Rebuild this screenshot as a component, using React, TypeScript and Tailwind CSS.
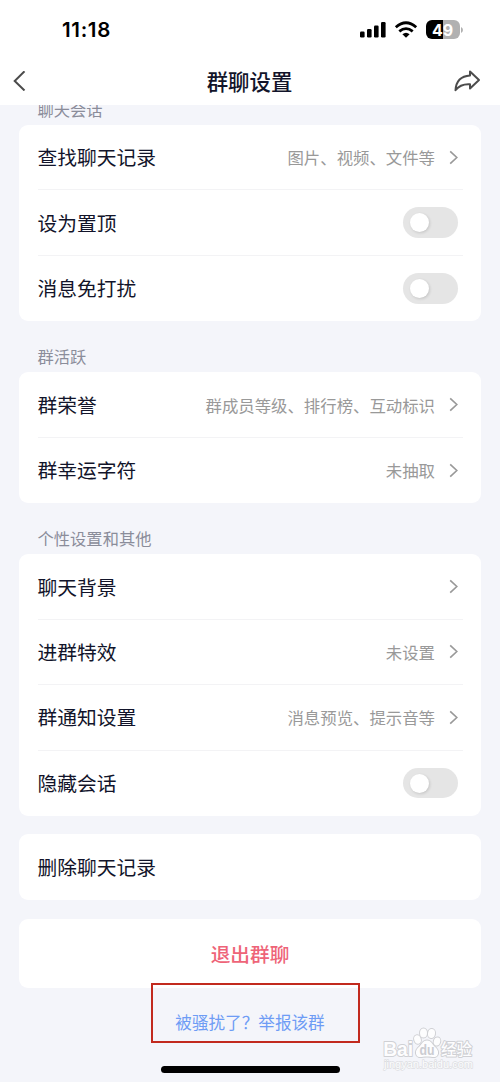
import React from "react";

const Chevron = () => (
  <svg className="ml-[14px] h-[15px] w-[10px] shrink-0" viewBox="0 0 10 15" fill="none" stroke="#999999" strokeWidth="1.6">
    <path d="M1.2 1.3 7.8 7.5 1.2 13.7" />
  </svg>
);

const Toggle = () => (
  <button type="button" role="switch" aria-checked="false" className="mr-[5px] flex h-[30.5px] w-[55px] items-center rounded-full bg-[#e5e5e5] pl-[6.5px]">
    <span className="h-[19px] w-[19px] rounded-full bg-white shadow-[1px_1px_3px_rgba(0,0,0,0.14)]" />
  </button>
);

type RowData = { label: string; value?: string; kind?: "link" | "toggle" | "plain" };

const Row = ({ label, value, kind = "link" }: RowData) => (
  <div className="flex h-[65.4px] items-center border-b border-[#f3f3f5] last:border-b-0">
    <span className="grow whitespace-nowrap text-[19.75px] leading-[28px] text-[#12142a]">{label}</span>
    {value && <span className="whitespace-nowrap text-[16.4px] leading-[24px] text-[#999999]">{value}</span>}
    {kind === "link" && (
      <span className="mr-[4px] flex">
        <Chevron />
      </span>
    )}
    {kind === "toggle" && <Toggle />}
  </div>
);

const Card = ({ rows }: { rows: RowData[] }) => (
  <section className="mx-[19px] rounded-[9px] bg-white pr-[18px] pl-[18.5px]">
    {rows.map((row) => (
      <Row key={row.label} {...row} />
    ))}
  </section>
);

const Heading = ({ children }: { children: React.ReactNode }) => (
  <h2 className="flex h-[51.2px] items-end pb-[4px] pl-[37.5px] text-[16.3px] leading-[24px] text-[#8b8d9a]">{children}</h2>
);

const Watermark = () => (
  <svg className="absolute top-[1024px] left-[380px] h-[50px] w-[98px]" viewBox="0 0 98 50">
    <g fill="#fdfdfe" stroke="#cfd0d4" strokeWidth="2" paintOrder="stroke" strokeLinejoin="round">
      <ellipse cx="37.5" cy="15.5" rx="3.3" ry="4.3" transform="rotate(-15 37.5 15.5)" />
      <ellipse cx="43.5" cy="9" rx="3.5" ry="4.6" />
      <ellipse cx="51.5" cy="9.5" rx="3.5" ry="4.5" transform="rotate(8 51.5 9.5)" />
      <ellipse cx="57" cy="17.5" rx="3.2" ry="4.1" transform="rotate(15 57 17.5)" />
      <path d="M47 16.5c-4 0-5 3.5-7.5 6-2.5 2.2-4 4-3.5 7.2.5 3.4 4 3.8 7 3.1 2.8-.5 5.2-.5 8 0 3 .7 6.5.3 7-3.1.5-3.2-1-5-3.5-7.2-2.5-2.5-3.5-6-7.5-6Z" />
      <text x="3.2" y="31.5" fontSize="20.5" fontWeight="700" textLength="30" lengthAdjust="spacingAndGlyphs" fontFamily="Liberation Sans, sans-serif">Bai</text>
      <text x="61" y="31" fontSize="16" fontWeight="500" textLength="31" lengthAdjust="spacingAndGlyphs" fontFamily="Noto Sans CJK SC, sans-serif">经验</text>
      <text x="4" y="44" fontSize="10.5" stroke="#dcdde1" strokeWidth="1.3" textLength="89" lengthAdjust="spacingAndGlyphs" fontFamily="Liberation Sans, sans-serif">jingyan.baidu.com</text>
    </g>
    <text x="39.5" y="30.5" fontSize="14" fontWeight="700" fill="#cbccd1" textLength="15" lengthAdjust="spacingAndGlyphs" fontFamily="Liberation Sans, sans-serif">du</text>
  </svg>
);

export default function App() {
  return (
    <div className="relative flex h-[1082px] w-[500px] flex-col overflow-hidden bg-[#f4f5fa] font-['Noto_Sans_CJK_SC',sans-serif]">
      <header className="h-[105px] shrink-0 bg-white">
        <div className="flex h-[59px] items-center pr-[37px] pl-[62px]">
          <time className="grow pt-[1px] font-['Inter',sans-serif] text-[20.5px] leading-[24px] font-semibold tracking-[0.65px] text-black">11:18</time>
          <svg className="h-[17px] w-[26px]" viewBox="0 0 26 17" fill="black">
            <rect x="0" y="10.5" width="4.6" height="6" rx="1.2" />
            <rect x="7" y="8" width="4.6" height="8.5" rx="1.2" />
            <rect x="14" y="4.5" width="4.6" height="12" rx="1.2" />
            <rect x="21" y="1" width="4.6" height="15.5" rx="1.2" />
          </svg>
          <svg className="ml-[7.5px] h-[17px] w-[24px]" viewBox="0 0 24 17" fill="none" stroke="black" strokeWidth="2.8">
            <path d="M1.8 6.3Q12-2.8 22.2 6.3" />
            <path d="M5.3 10.4Q12 4.8 18.7 10.4" />
            <path d="M8.4 13.3Q12 10.3 15.6 13.3L12 16.8Z" fill="black" stroke="none" />
          </svg>
          <div className="ml-[8.5px] flex h-[18.5px] w-[34px] items-center justify-center rounded-[6px] bg-[linear-gradient(to_right,#000_50%,#b1b1b1_50%)] pr-[1px] font-['Inter',sans-serif] text-[16px] leading-none font-bold text-white">49</div>
          <svg className="ml-[1px] h-[6px] w-[2px]" viewBox="0 0 2 6" fill="#b1b1b1">
            <path d="M0 0Q2 1 2 3T0 6Z" />
          </svg>
        </div>
        <div className="flex h-[43px] items-center justify-between pr-[19px] pl-[12px]">
          <svg className="h-[20px] w-[28px]" viewBox="0 0 28 20" fill="none" stroke="#4b4b4b" strokeWidth="2">
            <path d="M12.5 .3 2.7 10l9.8 9.5" />
          </svg>
          <h1 className="pl-[6px] text-[21.4px] leading-[30px] font-medium text-[#12142a]">群聊设置</h1>
          <svg className="h-[22px] w-[28px]" viewBox="0 0 28 22" fill="none" stroke="#4c4c4c" strokeWidth="2" strokeLinejoin="round">
            <path d="M17 1.5 26 10 17 18.5V14.2C11 13.8 6 15.5 2.5 20.2 3.1 11.5 8 6.2 17 5.600Z" />
          </svg>
        </div>
      </header>
      <main className="flex flex-col">
        <div className="flex h-[20px] items-end overflow-hidden">
          <h2 className="pb-[4px] pl-[37.5px] text-[16.3px] leading-[24px] text-[#8b8d9a]">聊天会话</h2>
        </div>
        <Card
          rows={[
            { label: "查找聊天记录", value: "图片、视频、文件等" },
            { label: "设为置顶", kind: "toggle" },
            { label: "消息免打扰", kind: "toggle" },
          ]}
        />
        <Heading>群活跃</Heading>
        <Card
          rows={[
            { label: "群荣誉", value: "群成员等级、排行榜、互动标识" },
            { label: "群幸运字符", value: "未抽取" },
          ]}
        />
        <Heading>个性设置和其他</Heading>
        <Card
          rows={[
            { label: "聊天背景" },
            { label: "进群特效", value: "未设置" },
            { label: "群通知设置", value: "消息预览、提示音等" },
            { label: "隐藏会话", kind: "toggle" },
          ]}
        />
        <div className="h-[18.6px]" />
        <Card rows={[{ label: "删除聊天记录", kind: "plain" }]} />
        <button type="button" className="mx-[19px] mt-[18.9px] h-[69.5px] rounded-[9px] bg-white text-[19.7px] font-medium text-[#ee6478]">
          退出群聊
        </button>
        <a className="mt-[22px] text-center text-[16.6px] leading-[24px] text-[#6e9cf5]">被骚扰了？举报该群</a>
      </main>
      <div className="absolute top-[983px] left-[151px] h-[60px] w-[209px] border-2 border-[#c22a1e]" />
      <div className="absolute top-[1066px] left-[161px] h-[6.5px] w-[179px] rounded-full bg-black" />
      <Watermark />
    </div>
  );
}
